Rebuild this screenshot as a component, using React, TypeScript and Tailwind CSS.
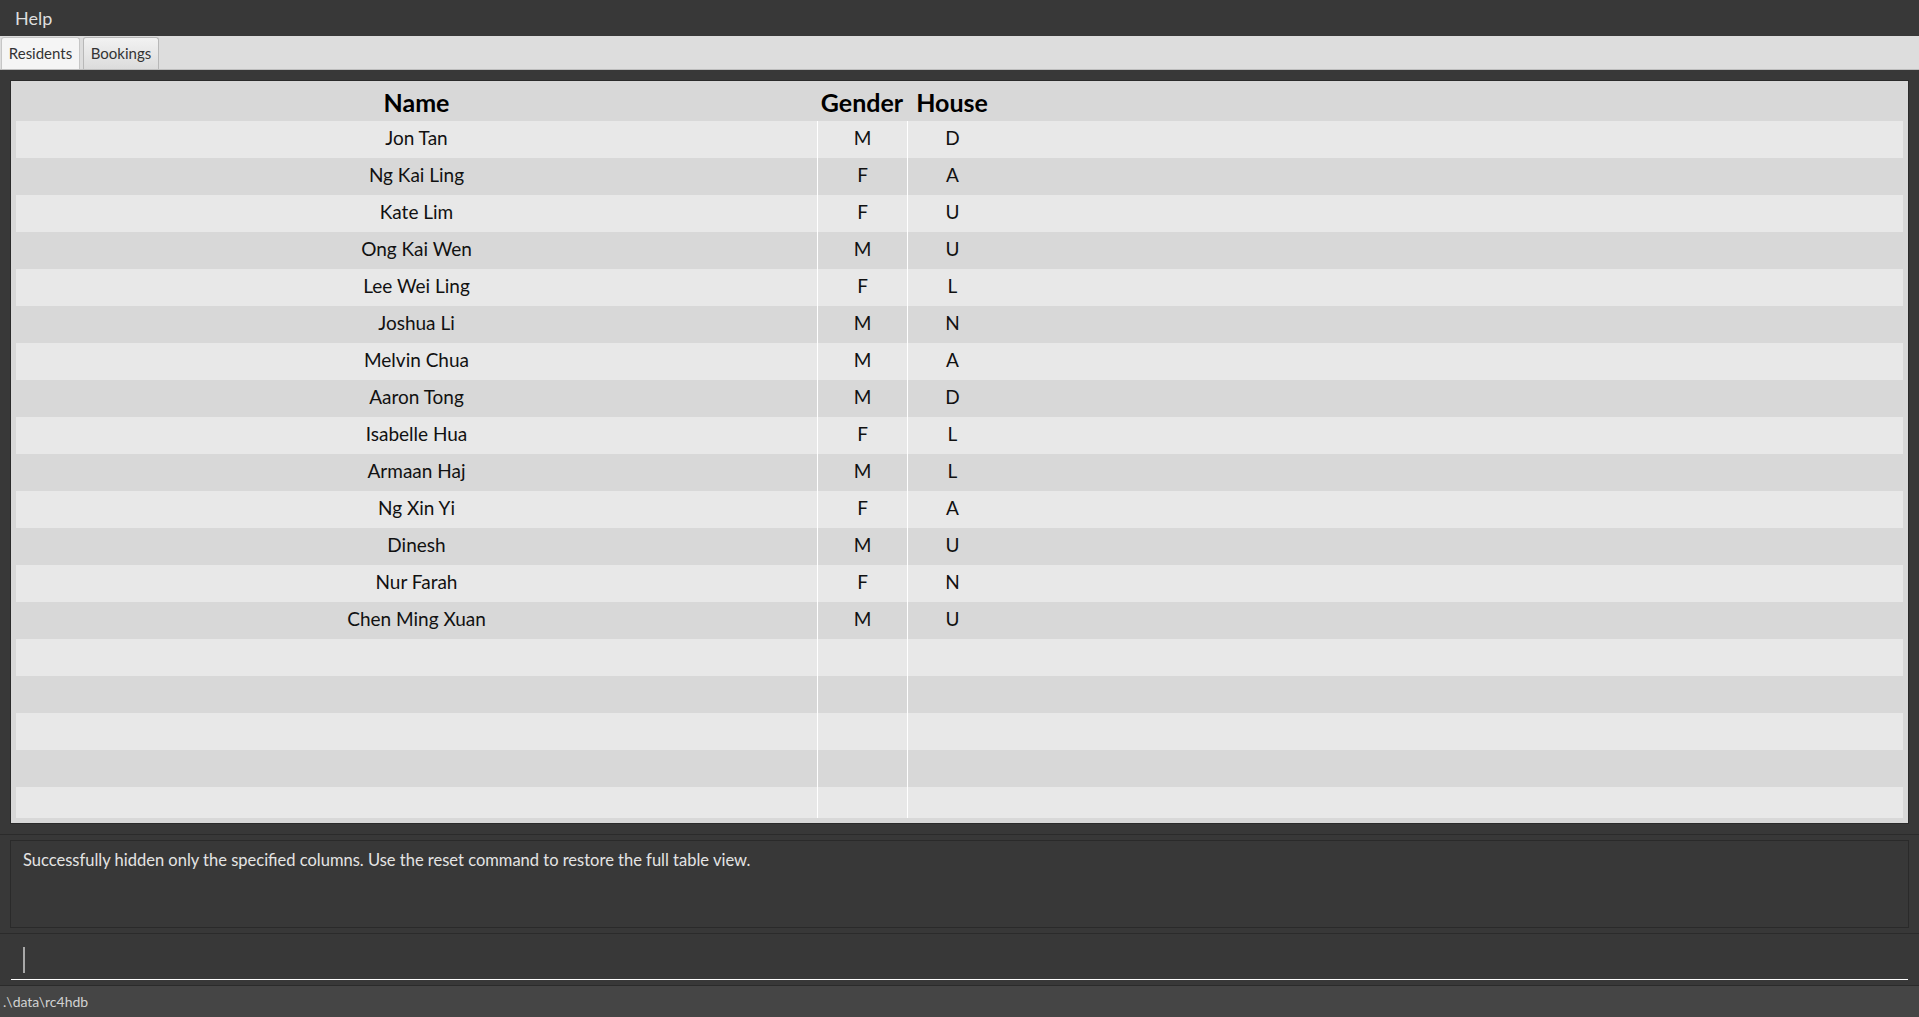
import React from 'react';

type Resident = { name: string; gender: string; house: string };

const residents: Resident[] = [
  { name: 'Jon Tan', gender: 'M', house: 'D' },
  { name: 'Ng Kai Ling', gender: 'F', house: 'A' },
  { name: 'Kate Lim', gender: 'F', house: 'U' },
  { name: 'Ong Kai Wen', gender: 'M', house: 'U' },
  { name: 'Lee Wei Ling', gender: 'F', house: 'L' },
  { name: 'Joshua Li', gender: 'M', house: 'N' },
  { name: 'Melvin Chua', gender: 'M', house: 'A' },
  { name: 'Aaron Tong', gender: 'M', house: 'D' },
  { name: 'Isabelle Hua', gender: 'F', house: 'L' },
  { name: 'Armaan Haj', gender: 'M', house: 'L' },
  { name: 'Ng Xin Yi', gender: 'F', house: 'A' },
  { name: 'Dinesh', gender: 'M', house: 'U' },
  { name: 'Nur Farah', gender: 'F', house: 'N' },
  { name: 'Chen Ming Xuan', gender: 'M', house: 'U' },
];

// empty rows fill the rest of the table view, like the JavaFX TableView does
const rows: (Resident | null)[] = [...residents, null, null, null, null, null];

function Row({ r, i }: { r: Resident | null; i: number }) {
  const bg = i % 2 === 0 ? 'bg-[#e8e8e8]' : 'bg-[#d8d8d8]';
  return (
    <div className={`flex h-[37px] shrink-0 items-center text-[19px] text-[#111] ${bg}`}>
      <div className="flex h-full w-[801px] items-center justify-center pb-[3px]">{r?.name}</div>
      <div className="flex h-full w-[90px] items-center justify-center border-l border-white pb-[3px]">{r?.gender}</div>
      <div className="flex h-full w-[90px] items-center justify-center border-l border-white pb-[3px]">{r?.house}</div>
      <div className="h-full flex-1" />
    </div>
  );
}

export default function App() {
  return (
    <div
      className="flex h-[1017px] w-[1919px] flex-col overflow-hidden bg-[#383838]"
      style={{ fontFamily: 'Lato, "Open Sans", sans-serif' }}
    >
      {/* Menu bar */}
      <div className="flex h-[36px] shrink-0 items-center px-[15px] text-[18px] text-[#dedede]">
        Help
      </div>

      {/* Tabs */}
      <div className="flex h-[34px] shrink-0 items-end gap-[3px] border-b border-[#bdbdbd] bg-[#dddddd] pl-[1px]">
        <div className="flex h-[32px] w-[79px] items-center justify-center rounded-t-[3px] border border-b-0 border-[#c6c6c6] bg-[#f5f5f5] text-[15px] text-[#333]">
          Residents
        </div>
        <div className="flex h-[32px] w-[76px] items-center justify-center rounded-t-[3px] border border-b-0 border-[#b8b8b8] bg-gradient-to-b from-[#f2f2f2] to-[#dcdcdc] text-[15px] text-[#333]">
          Bookings
        </div>
      </div>

      {/* Table panel */}
      <div className="shrink-0 pt-[10px]">
        <div className="ml-[10px] flex h-[744px] w-[1899px] flex-col border border-[#2a2a2a] bg-[#d8d8d8] px-[5px] pb-[5px]">
          <div className="flex h-[40px] shrink-0 items-center pt-[4px] text-[25px] font-bold text-black">
            <div className="w-[801px] text-center">Name</div>
            <div className="w-[90px] text-center">Gender</div>
            <div className="w-[90px] text-center">House</div>
          </div>
          <div className="flex min-h-0 flex-1 flex-col overflow-hidden">
            {rows.map((r, i) => (
              <Row key={i} r={r} i={i} />
            ))}
          </div>
        </div>
      </div>

      {/* Result display */}
      <div className="mt-[10px] h-px shrink-0 bg-[#2b2b2b]" />
      <div className="shrink-0 pt-[5px]">
        <div className="ml-[10px] h-[88px] w-[1899px] border border-[#2a2a2a] px-[12px] pt-[7px] text-[16.5px] text-[#e4e4e4]">
          Successfully hidden only the specified columns. Use the reset command to restore the full table view.
        </div>
      </div>
      <div className="mt-[5px] h-px shrink-0 bg-[#2b2b2b]" />

      {/* Command box */}
      <div className="h-[51px] shrink-0 pt-[6px]">
        <div className="ml-[11px] flex h-[40px] w-[1897px] items-start border-b border-white pl-[12px] pt-[7px]">
          <div className="h-[26px] w-[2px] bg-[#a8a8a8]" />
        </div>
      </div>
      <div className="h-px shrink-0 bg-[#2b2b2b]" />

      {/* Status bar */}
      <div className="flex flex-1 items-center bg-[#454545] px-[3px] text-[14px] text-[#d2d2d2]">
        .\data\rc4hdb
      </div>
    </div>
  );
}
